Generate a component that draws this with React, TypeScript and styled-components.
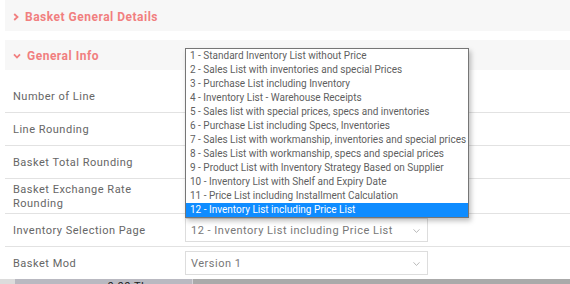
import React from "react";
import styled, { createGlobalStyle } from "styled-components";

const Global = createGlobalStyle`
  html, body { margin: 0; padding: 0; background: #fff; }
  body { font-family: Roboto, "Liberation Sans", sans-serif; overflow: hidden; }
  * { box-sizing: border-box; }
`;

const Page = styled.div`
  width: 570px;
  display: flex;
  flex-direction: column;
`;

const Main = styled.div`
  padding-left: 5px;
  display: flex;
  flex-direction: column;
`;

const SectionHeader = styled.div<{ $mt?: number; $h: number }>`
  height: ${(p) => p.$h}px;
  margin-top: ${(p) => p.$mt ?? 0}px;
  background: #f7f7f7;
  display: flex;
  align-items: center;
  gap: 6px;
  padding: 2px 0 0 8px;
  color: #f17f7f;
  font-size: 12px;
  font-weight: 700;
  letter-spacing: 0.5px;
`;

const Content = styled.div`
  padding-top: 10px;
  display: flex;
  flex-direction: column;
`;

const Row = styled.div<{ $last?: boolean }>`
  display: flex;
  align-items: center;
  min-height: 32px;
  border-bottom: ${(p) => (p.$last ? "none" : "1px solid #e2e2e2")};
  box-sizing: content-box;
`;

const Label = styled.div`
  width: 180px;
  padding: 4px 0 2px 8px;
  color: #666;
  font-size: 11px;
  line-height: 14px;
  letter-spacing: 0.5px;
`;

const SelectWrap = styled.div`
  position: relative;
`;

const SelectBox = styled.div`
  width: 243px;
  height: 24px;
  border: 1px solid #ddd;
  display: flex;
  align-items: center;
  justify-content: space-between;
  padding: 1px 6px 0 5px;
  color: #777;
  font-size: 11px;
  letter-spacing: 0.5px;
  white-space: nowrap;
`;

const ListBox = styled.div`
  position: absolute;
  left: 0;
  bottom: 100%;
  width: 284px;
  border: 1px solid #767676;
  background: #fff;
  box-shadow: 2px 3px 5px rgba(0, 0, 0, 0.25);
  display: flex;
  flex-direction: column;
  z-index: 2;
`;

const Option = styled.div<{ $selected?: boolean }>`
  height: 14px;
  line-height: 14px;
  padding-left: 4px;
  font-size: 10px;
  white-space: nowrap;
  color: ${(p) => (p.$selected ? "#fff" : "#5f5f5f")};
  background: ${(p) => (p.$selected ? "#0f8cff" : "transparent")};
`;

const Footer = styled.div`
  height: 20px;
  display: grid;
  grid-template-columns: 15px 178px 1fr;
  background: #aaa;
`;

const FootCell = styled.div<{ $bg: string; $border?: boolean }>`
  background: ${(p) => p.$bg};
  border-right: ${(p) => (p.$border ? "1px solid #d4d4d8" : "none")};
  display: flex;
  justify-content: center;
  padding-top: 1px;
  padding-left: 48px;
  font-size: 11px;
  color: #222;
  letter-spacing: 0.5px;
`;

const ChevronRight = () => (
  <svg width="6" height="8" viewBox="0 0 6 8">
    <polyline points="1.2,1 4.5,4 1.2,7" fill="none" stroke="#f17f7f" strokeWidth="1.8" />
  </svg>
);

const ChevronDown = ({ color = "#f17f7f", w = 8, sw = 1.8 }: { color?: string; w?: number; sw?: number }) => (
  <svg width={w} height="6" viewBox="0 0 8 6">
    <polyline points="1,1.3 4,4.5 7,1.3" fill="none" stroke={color} strokeWidth={sw} />
  </svg>
);

const options = [
  "1 - Standard Inventory List without Price",
  "2 - Sales List with inventories and special Prices",
  "3 - Purchase List including Inventory",
  "4 - Inventory List - Warehouse Receipts",
  "5 - Sales list with special prices, specs and inventories",
  "6 - Purchase List including Specs, Inventories",
  "7 - Sales List with workmanship, inventories and special prices",
  "8 - Sales List with workmanship, specs and special prices",
  "9 - Product List with Inventory Strategy Based on Supplier",
  "10 - Inventory List with Shelf and Expiry Date",
  "11 - Price List including Installment Calculation",
  "12 - Inventory List including Price List",
];

export default function App() {
  return (
    <Page>
      <Global />
      <Main>
        <SectionHeader $h={31}>
          <ChevronRight />
          <span>Basket General Details</span>
        </SectionHeader>
        <SectionHeader $h={30} $mt={9}>
          <ChevronDown />
          <span>General Info</span>
        </SectionHeader>
        <Content>
          <Row>
            <Label>Number of Line</Label>
          </Row>
          <Row>
            <Label>Line Rounding</Label>
          </Row>
          <Row>
            <Label>Basket Total Rounding</Label>
          </Row>
          <Row>
            <Label>
              Basket Exchange Rate
              <br />
              Rounding
            </Label>
          </Row>
          <Row>
            <Label>Inventory Selection Page</Label>
            <SelectWrap>
              <ListBox>
                {options.map((o, i) => (
                  <Option key={o} $selected={i === options.length - 1}>
                    {o}
                  </Option>
                ))}
              </ListBox>
              <SelectBox>
                <span>12 - Inventory List including Price List</span>
                <ChevronDown color="#bbb" w={9} sw={1} />
              </SelectBox>
            </SelectWrap>
          </Row>
          <Row $last>
            <Label>Basket Mod</Label>
            <SelectWrap>
              <SelectBox>
                <span>Version 1</span>
                <ChevronDown color="#bbb" w={9} sw={1} />
              </SelectBox>
            </SelectWrap>
          </Row>
        </Content>
      </Main>
      <Footer>
        <FootCell $bg="#dcdcdc" />
        <FootCell $bg="#b9b9c1" $border>
          0.00 TL
        </FootCell>
        <FootCell $bg="#aaa" />
      </Footer>
    </Page>
  );
}
